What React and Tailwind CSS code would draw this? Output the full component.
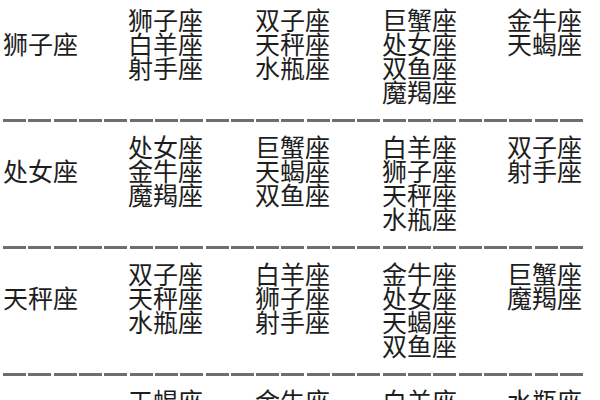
import React from "react";

const rows = [
  {
    sign: "狮子座",
    cols: [
      ["狮子座", "白羊座", "射手座"],
      ["双子座", "天秤座", "水瓶座"],
      ["巨蟹座", "处女座", "双鱼座", "魔羯座"],
      ["金牛座", "天蝎座"],
    ],
  },
  {
    sign: "处女座",
    cols: [
      ["处女座", "金牛座", "魔羯座"],
      ["巨蟹座", "天蝎座", "双鱼座"],
      ["白羊座", "狮子座", "天秤座", "水瓶座"],
      ["双子座", "射手座"],
    ],
  },
  {
    sign: "天秤座",
    cols: [
      ["双子座", "天秤座", "水瓶座"],
      ["白羊座", "狮子座", "射手座"],
      ["金牛座", "处女座", "天蝎座", "双鱼座"],
      ["巨蟹座", "魔羯座"],
    ],
  },
  {
    sign: "天蝎座",
    cols: [
      ["天蝎座", "巨蟹座", "双鱼座"],
      ["金牛座", "处女座", "魔羯座"],
      ["白羊座", "狮子座", "天秤座", "射手座"],
      ["水瓶座", "双子座"],
    ],
  },
];

function Separator() {
  const segs = Array.from({ length: 23 });
  return (
    <div className="flex justify-between w-[580px] ml-[3px] h-[3px]">
      {segs.map((_, i) => (
        <span key={i} className="block w-[23px] h-[3px] bg-[#6e6e6e]" />
      ))}
    </div>
  );
}

function Row({ row, first }) {
  return (
    <div
      className={
        "grid grid-cols-[125px_127px_127px_125px_auto] pl-[3px] pb-[16px] " +
        (first ? "pt-[7px]" : "pt-[12px]")
      }
    >
      <div className="pt-[24px]">{row.sign}</div>
      {row.cols.map((c, i) => (
        <div key={i} className="flex flex-col">
          {c.map((t, j) => (
            <div key={j}>{t}</div>
          ))}
        </div>
      ))}
    </div>
  );
}

export default function App() {
  return (
    <div
      className="w-[600px] h-[400px] overflow-hidden bg-white text-[#1e1e1e] text-[25px] leading-[24px]"
      style={{ fontFamily: '"Noto Sans CJK SC", sans-serif' }}
    >
      {rows.map((r, i) => (
        <React.Fragment key={i}>
          {i > 0 && <Separator />}
          <Row row={r} first={i === 0} />
        </React.Fragment>
      ))}
    </div>
  );
}
